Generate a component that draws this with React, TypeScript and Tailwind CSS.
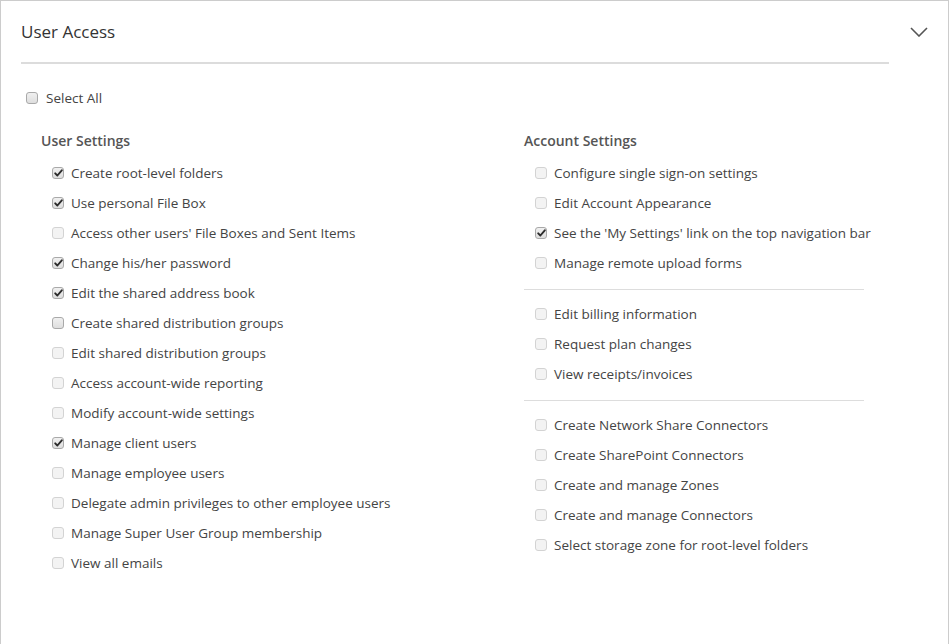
import React from "react";

type Perm = { label: string; checked?: boolean; disabled?: boolean };

const userSettings: Perm[] = [
  { label: "Create root-level folders", checked: true },
  { label: "Use personal File Box", checked: true },
  { label: "Access other users' File Boxes and Sent Items", disabled: true },
  { label: "Change his/her password", checked: true },
  { label: "Edit the shared address book", checked: true },
  { label: "Create shared distribution groups" },
  { label: "Edit shared distribution groups", disabled: true },
  { label: "Access account-wide reporting", disabled: true },
  { label: "Modify account-wide settings", disabled: true },
  { label: "Manage client users", checked: true },
  { label: "Manage employee users", disabled: true },
  { label: "Delegate admin privileges to other employee users", disabled: true },
  { label: "Manage Super User Group membership", disabled: true },
  { label: "View all emails", disabled: true },
];

const accountGroups: Perm[][] = [
  [
    { label: "Configure single sign-on settings", disabled: true },
    { label: "Edit Account Appearance", disabled: true },
    { label: "See the 'My Settings' link on the top navigation bar", checked: true },
    { label: "Manage remote upload forms", disabled: true },
  ],
  [
    { label: "Edit billing information", disabled: true },
    { label: "Request plan changes", disabled: true },
    { label: "View receipts/invoices", disabled: true },
  ],
  [
    { label: "Create Network Share Connectors", disabled: true },
    { label: "Create SharePoint Connectors", disabled: true },
    { label: "Create and manage Zones", disabled: true },
    { label: "Create and manage Connectors", disabled: true },
    { label: "Select storage zone for root-level folders", disabled: true },
  ],
];

function Box({ checked, disabled }: { checked?: boolean; disabled?: boolean }) {
  const tone =
    disabled && !checked
      ? "border-[#d3d3d3] bg-[#f3f3f3]"
      : "border-[#a9a9a9] bg-gradient-to-b from-[#f0f0f0] to-[#dedede]";
  return (
    <span
      className={`flex h-[12px] w-[12px] shrink-0 items-center justify-center rounded-[3px] border ${tone}`}
    >
      {checked && (
        <svg width="9" height="8" viewBox="0 0 9 8">
          <path
            d="M1.2 4.3 L3.4 6.5 L7.8 1.3"
            fill="none"
            stroke="#2b2b2b"
            strokeWidth="1.9"
            strokeLinecap="round"
            strokeLinejoin="round"
          />
        </svg>
      )}
    </span>
  );
}

function Row({ perm }: { perm: Perm }) {
  return (
    <label className="flex h-[30px] items-center gap-[7px] pl-[11px]">
      <Box checked={perm.checked} disabled={perm.disabled} />
      <span className="whitespace-nowrap text-[13.5px] text-[#444]">{perm.label}</span>
    </label>
  );
}

export default function App() {
  return (
    <div
      className="min-h-[644px] w-[949px] border-x border-t border-[#cccccc] bg-white"
      style={{ fontFamily: '"Open Sans", "Liberation Sans", sans-serif' }}
    >
      {/* Header */}
      <div className="flex h-[61px] items-center justify-between pl-[20px] pr-[20px]">
        <h2 className="text-[17px] text-[#333]">User Access</h2>
        <svg width="18" height="10" viewBox="0 0 18 10">
          <path d="M1 1 L9 9 L17 1" fill="none" stroke="#555" strokeWidth="1.6" />
        </svg>
      </div>
      <div className="ml-[20px] h-[2px] w-[868px] bg-[#dcdcdc]" />

      <div className="px-[20px]">
        {/* Select All */}
        <label className="mt-[19px] flex h-[30px] items-center gap-[8px] pl-[5px]">
          <Box />
          <span className="text-[13.5px] text-[#444]">Select All</span>
        </label>

        <div className="mt-[17px] flex">
          {/* User Settings */}
          <div className="w-[503px] pl-[20px]">
            <h3 className="flex h-[20px] items-center text-[14px] font-semibold text-[#555]">
              User Settings
            </h3>
            <div className="mt-[8px]">
              {userSettings.map((p) => (
                <Row key={p.label} perm={p} />
              ))}
            </div>
          </div>

          {/* Account Settings */}
          <div className="w-[380px]">
            <h3 className="flex h-[20px] items-center text-[14px] font-semibold text-[#555]">
              Account Settings
            </h3>
            <div className="mt-[8px]">
              {accountGroups.map((group, i) => (
                <div key={i}>
                  {i > 0 && <div className="mb-[9px] mt-[11px] h-px w-[340px] bg-[#dddddd]" />}
                  {group.map((p) => (
                    <Row key={p.label} perm={p} />
                  ))}
                </div>
              ))}
            </div>
          </div>
        </div>
      </div>
    </div>
  );
}
